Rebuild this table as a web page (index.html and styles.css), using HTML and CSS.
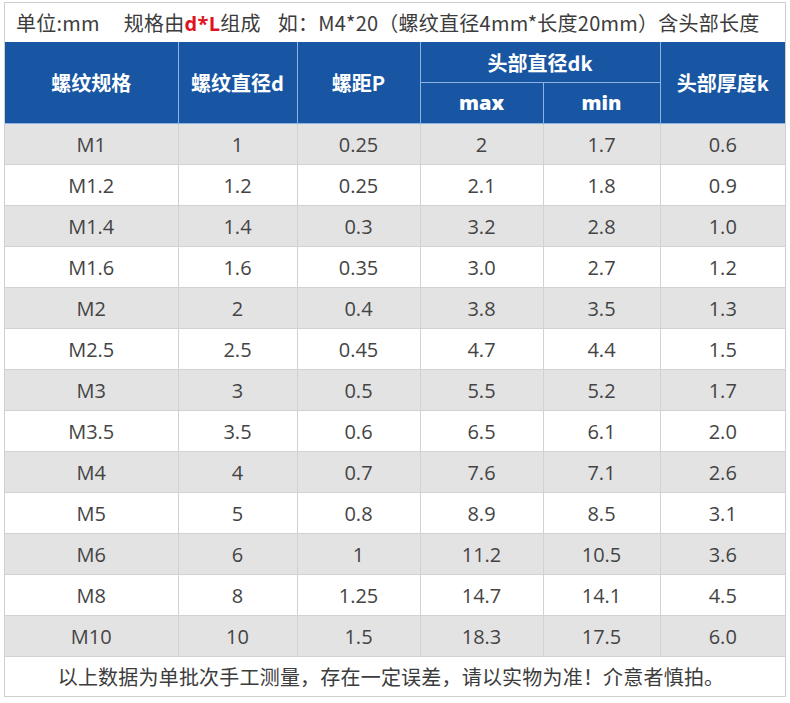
FILE: index.html
```html
<!DOCTYPE html>
<html lang="zh-CN">
<head>
<meta charset="utf-8">
<title>螺纹规格表</title>
<link rel="stylesheet" href="styles.css">
</head>
<body>
<div class="sheet">
  <div class="caption">
    <span class="unit">单位:mm</span>
    <span class="rule">规格由<b class="red">d*L</b>组成</span>
    <span class="example">如：M4*20（螺纹直径4mm*长度20mm）含头部长度</span>
  </div>
  <table class="spec">
    <colgroup>
      <col class="c1"><col class="c2"><col class="c3"><col class="c4"><col class="c5"><col class="c6">
    </colgroup>
    <thead>
      <tr class="h1">
        <th rowspan="2">螺纹规格</th>
        <th rowspan="2">螺纹直径d</th>
        <th rowspan="2">螺距P</th>
        <th colspan="2" class="top">头部直径dk</th>
        <th rowspan="2">头部厚度k</th>
      </tr>
      <tr class="h2">
        <th class="sub">max</th>
        <th class="sub">min</th>
      </tr>
    </thead>
    <tbody>
      <tr class="g"><td>M1</td><td>1</td><td>0.25</td><td>2</td><td>1.7</td><td>0.6</td></tr>
      <tr><td>M1.2</td><td>1.2</td><td>0.25</td><td>2.1</td><td>1.8</td><td>0.9</td></tr>
      <tr class="g"><td>M1.4</td><td>1.4</td><td>0.3</td><td>3.2</td><td>2.8</td><td>1.0</td></tr>
      <tr><td>M1.6</td><td>1.6</td><td>0.35</td><td>3.0</td><td>2.7</td><td>1.2</td></tr>
      <tr class="g"><td>M2</td><td>2</td><td>0.4</td><td>3.8</td><td>3.5</td><td>1.3</td></tr>
      <tr><td>M2.5</td><td>2.5</td><td>0.45</td><td>4.7</td><td>4.4</td><td>1.5</td></tr>
      <tr class="g"><td>M3</td><td>3</td><td>0.5</td><td>5.5</td><td>5.2</td><td>1.7</td></tr>
      <tr><td>M3.5</td><td>3.5</td><td>0.6</td><td>6.5</td><td>6.1</td><td>2.0</td></tr>
      <tr class="g"><td>M4</td><td>4</td><td>0.7</td><td>7.6</td><td>7.1</td><td>2.6</td></tr>
      <tr><td>M5</td><td>5</td><td>0.8</td><td>8.9</td><td>8.5</td><td>3.1</td></tr>
      <tr class="g"><td>M6</td><td>6</td><td>1</td><td>11.2</td><td>10.5</td><td>3.6</td></tr>
      <tr><td>M8</td><td>8</td><td>1.25</td><td>14.7</td><td>14.1</td><td>4.5</td></tr>
      <tr class="g"><td>M10</td><td>10</td><td>1.5</td><td>18.3</td><td>17.5</td><td>6.0</td></tr>
    </tbody>
  </table>
  <div class="note">以上数据为单批次手工测量，存在一定误差，请以实物为准！介意者慎拍。</div>
</div>
</body>
</html>
```

FILE: styles.css
```css
html, body {
  margin: 0;
  padding: 0;
  background: #ffffff;
}

body {
  padding: 2px 0 0 4px;
  font-family: "Noto Sans CJK SC", "Noto Sans", sans-serif;
}

.sheet {
  width: 782px;
  box-sizing: border-box;
  border: 1px solid #cfcfcf;
  background: #fff;
}

.caption {
  height: 39px;
  display: flex;
  align-items: center;
  padding-left: 11px;
  font-size: 20px;
  color: #3c3c3c;
  white-space: nowrap;
  letter-spacing: 0.25px;
}

.caption .unit {
  margin-right: 24px;
}

.caption .rule {
  margin-right: 17px;
}

.caption .red {
  color: #e0141e;
  font-weight: bold;
  font-family: "Open Sans", "Noto Sans", sans-serif;
}

.spec {
  width: 100%;
  border-collapse: collapse;
  table-layout: fixed;
}

.c1 { width: 173px; }
.c2 { width: 119px; }
.c3 { width: 123px; }
.c4 { width: 123px; }
.c5 { width: 117px; }
.c6 { width: 125px; }

.spec th {
  background: #1856a3;
  color: #ffffff;
  font-weight: bold;
  font-size: 20px;
  border: 1px solid #8db3e2;
  padding: 0;
  line-height: 1;
  height: 40px;
  vertical-align: middle;
}

.spec th.top {
  padding-top: 2px;
  height: 38px;
}

.spec th.sub {
  font-family: "Open Sans", "Noto Sans CJK SC", sans-serif;
  font-weight: 800;
  font-size: 20px;
}

.spec th:first-child,
.spec td:first-child {
  border-left: none;
}

.spec th:last-child,
.spec td:last-child {
  border-right: none;
}

.spec .h1 th {
  border-top: none;
}

.spec td {
  height: 40px;
  padding: 0;
  text-align: center;
  font-family: "Open Sans", "Noto Sans", sans-serif;
  font-size: 20px;
  color: #444444;
  border: 1px solid #d2d2d2;
}

.spec .g td {
  background: #e3e3e3;
}

.note {
  height: 39px;
  display: flex;
  align-items: center;
  justify-content: center;
  font-size: 20px;
  color: #3c3c3c;
  letter-spacing: 0.2px;
  padding-right: 8px;
}
```
